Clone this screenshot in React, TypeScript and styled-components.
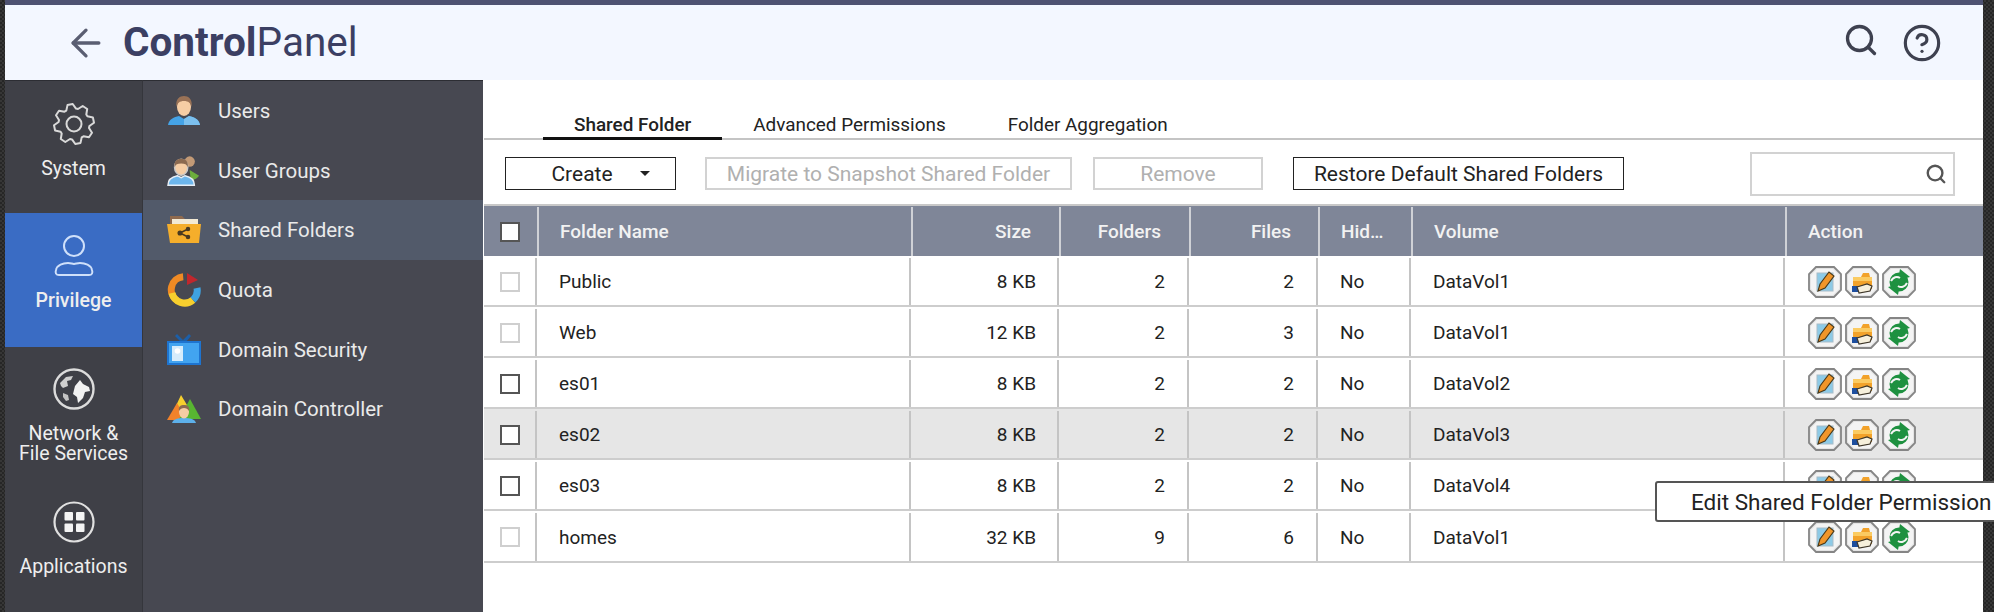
import styled, { createGlobalStyle } from "styled-components";
import { ArrowLeft, CircleHelp, Search } from "lucide-react";

const GlobalStyle = createGlobalStyle`
  html, body {
    margin: 0;
    height: 612px;
    overflow: hidden;
    background: repeating-conic-gradient(#262626 0 25%, #363636 0 50%) 0 0 / 4px 4px;
    font-family: Roboto, "Liberation Sans", sans-serif;
  }
`;

const Frame = styled.div`
  position: relative;
  width: 1978px;
  height: 612px;
  margin-left: 5px;
  display: flex;
  flex-direction: column;
  border-top: 5px solid #4e5272;
  box-sizing: border-box;
  background: #fff;
`;

const Header = styled.header`
  height: 75px;
  flex: none;
  display: flex;
  align-items: center;
  padding: 0 41px 0 59px;
  background: #f3f7ff;
  color: #3b3f63;
`;

const Title = styled.h1`
  margin: 0 0 0 15px;
  font-size: 40.5px;
  font-weight: 400;
  line-height: 1;
  b {
    font-weight: 700;
  }
`;

const HeaderIcons = styled.div`
  margin-left: auto;
  display: flex;
  align-items: center;
  gap: 23px;
  color: #3e4150;
`;

const HeaderSearch = styled(Search)`
  margin-top: -5px;
`;

const Body = styled.div`
  flex: 1;
  display: flex;
  min-height: 0;
`;

const Rail = styled.nav`
  width: 137px;
  flex: none;
  padding-top: 1px;
  border-top: 1px solid #2c2d33;
  border-right: 1px solid #35363c;
  background: #3f4047;
`;

const RailItem = styled.div<{ $h: number; $active?: boolean }>`
  height: ${({ $h }) => $h}px;
  box-sizing: border-box;
  padding-top: 21px;
  display: flex;
  flex-direction: column;
  align-items: center;
  text-align: center;
  background: ${({ $active }) => ($active ? "#3a6cc4" : "transparent")};
  color: #eee;
  font-size: 19.5px;
  font-weight: ${({ $active }) => ($active ? 500 : 400)};
  line-height: 20px;
`;

const RailLabel = styled.span<{ $mt?: number }>`
  margin-top: ${({ $mt }) => $mt ?? 14}px;
`;

const SubMenu = styled.nav`
  width: 340px;
  flex: none;
  border-top: 1px solid #2c2d33;
  background: #474851;
`;

const SubItem = styled.div<{ $active?: boolean }>`
  height: 59.7px;
  display: flex;
  align-items: center;
  gap: 17px;
  padding-left: 24px;
  background: ${({ $active }) => ($active ? "#525a6a" : "transparent")};
  color: #eaeaea;
  font-size: 20.5px;
`;

const SubIcon = styled.span`
  width: 34px;
  flex: none;
  display: flex;
  justify-content: center;
`;

const Main = styled.main`
  flex: 1;
  min-width: 0;
  margin-left: 1px;
  font-size: 19px;
  color: #222;
`;

const Tabs = styled.div`
  height: 60px;
  box-sizing: border-box;
  display: flex;
  align-items: flex-end;
  padding-left: 59px;
  border-bottom: 2px solid #c4c4c4;
  font-size: 18.9px;
`;

const Tab = styled.div<{ $active?: boolean }>`
  height: 37px;
  box-sizing: border-box;
  margin-bottom: -2px;
  padding: 10px 31px 0;
  font-weight: ${({ $active }) => ($active ? 500 : 400)};
  border-bottom: 3px solid ${({ $active }) => ($active ? "#111" : "transparent")};
`;

const Toolbar = styled.div`
  height: 64px;
  box-sizing: border-box;
  display: flex;
  align-items: center;
  padding: 3px 28px 0 21px;
`;

const Button = styled.div<{ $w: number; $ml?: number; $pl?: number; $disabled?: boolean }>`
  width: ${({ $w }) => $w}px;
  height: 33px;
  box-sizing: border-box;
  margin-left: ${({ $ml }) => $ml ?? 0}px;
  padding-left: ${({ $pl }) => $pl ?? 0}px;
  display: flex;
  align-items: center;
  justify-content: center;
  gap: 27px;
  border: ${({ $disabled }) => ($disabled ? "2px solid #d2d2d2" : "1.5px solid #222")};
  color: ${({ $disabled }) => ($disabled ? "#b0b0b0" : "#222")};
  font-size: 21px;
  white-space: nowrap;
`;

const Caret = styled.span`
  width: 0;
  height: 0;
  border-left: 5px solid transparent;
  border-right: 5px solid transparent;
  border-top: 5px solid #222;
`;

const SearchBox = styled.div`
  width: 205px;
  height: 44px;
  box-sizing: border-box;
  margin-left: auto;
  display: flex;
  align-items: center;
  justify-content: flex-end;
  padding-right: 6px;
  border: 2px solid #d2d2d2;
  color: #555;
`;

const HEAD_COLS = "53px 374px 148px 130px 129px 93px 374px 197px";
const ROW_COLS = "51px 374px 148px 130px 129px 93px 374px 198px";

const HeadRow = styled.div`
  height: 52px;
  box-sizing: border-box;
  display: grid;
  grid-template-columns: ${HEAD_COLS};
  border-top: 2px solid #c8c8c8;
  background: #7f8698;
  color: #f2f2f2;
  font-weight: 500;
`;

const HeadCell = styled.div<{ $right?: boolean; $pr?: number }>`
  margin-top: 1px;
  display: flex;
  align-items: center;
  justify-content: ${({ $right }) => ($right ? "flex-end" : "flex-start")};
  padding: 0 ${({ $pr }) => $pr ?? 0}px 0 21px;
  border-left: 2px solid #cfd1d6;
  &:first-child {
    border-left: none;
    padding-left: 16px;
  }
`;

const Row = styled.div<{ $hover?: boolean }>`
  height: 51.1px;
  box-sizing: border-box;
  display: grid;
  grid-template-columns: ${ROW_COLS};
  border-bottom: 2px solid #cdcdcd;
  background: ${({ $hover }) => ($hover ? "#e6e6e6" : "#fff")};
`;

const Cell = styled.div<{ $right?: boolean; $pr?: number }>`
  margin-top: 2px;
  display: flex;
  align-items: center;
  justify-content: ${({ $right }) => ($right ? "flex-end" : "flex-start")};
  padding: 0 ${({ $pr }) => $pr ?? 0}px 0 22px;
  border-left: 2px solid #c4c4c4;
  &:first-child {
    border-left: none;
    padding-left: 16px;
  }
`;

const Check = styled.span<{ $light?: boolean }>`
  width: 20px;
  height: 20px;
  box-sizing: border-box;
  border: 2px solid ${({ $light }) => ($light ? "#cfcfcf" : "#555")};
  background: #fff;
`;

const Actions = styled.div`
  display: flex;
  gap: 3px;
  margin-left: 1px;
`;

const Tooltip = styled.div`
  position: absolute;
  left: 1650px;
  top: 476px;
  width: 345px;
  height: 41px;
  box-sizing: border-box;
  display: flex;
  align-items: center;
  padding-left: 34px;
  border: 2px solid #555;
  border-radius: 3px 0 0 3px;
  background: #fff;
  color: #222;
  font-size: 22.5px;
  white-space: nowrap;
`;

// 8-toothed gear outline
function gearPath(cx: number, cy: number, r1: number, r2: number) {
  const pts: string[] = [];
  for (let i = 0; i < 8; i++) {
    const a = (i * Math.PI) / 4 - Math.PI / 8;
    const steps: [number, number][] = [
      [r1, a - 0.13],
      [r2, a + 0.06],
      [r2, a + 0.33],
      [r1, a + 0.52],
    ];
    steps.forEach(([r, t]) =>
      pts.push(`${(cx + r * Math.cos(t)).toFixed(1)} ${(cy + r * Math.sin(t)).toFixed(1)}`)
    );
  }
  return `M${pts.join("L")}Z`;
}

const GearIcon = () => (
  <svg width="44" height="42" viewBox="0 0 44 42" fill="none" stroke="#d9d9d9" strokeWidth="2" strokeLinejoin="round">
    <path d={gearPath(22, 21, 15.5, 20)} />
    <circle cx="22" cy="21" r="7.5" />
  </svg>
);

const PrivilegeIcon = () => (
  <svg width="44" height="42" viewBox="0 0 44 42" fill="none" stroke="#cfe0fa" strokeWidth="2">
    <circle cx="22" cy="12" r="10" />
    <path d="M7 41c-3 0-4-2-3-5 1-5 7-7 12-7 3 0 4 1 6 1s3-1 6-1c5 0 11 2 12 7 1 3 0 5-3 5Z" />
  </svg>
);

const GlobeIcon = () => (
  <svg width="44" height="42" viewBox="0 0 44 42">
    <circle cx="22" cy="21" r="19.5" fill="none" stroke="#dcdcdc" strokeWidth="2.4" />
    <path d="M23 18l5-6 3 4 6 3 1 4-5 1-2 6-5 5-1-6-4-3Z" fill="#f2f2f2" />
    <path d="M8 15l6-6 7-1-2 4-4 1 1 5-5 2-2-2Z" fill="#d0d0d0" />
    <path d="M11 25l5 2 1 5-3 1-3-4Z" fill="#c4c4c4" />
  </svg>
);

const AppsIcon = () => (
  <svg width="44" height="42" viewBox="0 0 44 42">
    <circle cx="22" cy="21" r="19.5" fill="none" stroke="#e0e0e0" strokeWidth="2.2" />
    <rect x="12.5" y="11" width="8.5" height="8.5" rx="1" fill="#f4f4f4" />
    <rect x="24" y="11" width="8.5" height="8.5" rx="1" fill="#f4f4f4" />
    <rect x="12.5" y="22.5" width="8.5" height="8.5" rx="1" fill="#f4f4f4" />
    <rect x="24" y="22.5" width="8.5" height="8.5" rx="1" fill="#f4f4f4" />
  </svg>
);

const UsersIcon = () => (
  <svg width="34" height="34" viewBox="0 0 34 34">
    <path d="M1 31c1-6 6-8 11-9l5 3 5-3c5 1 10 3 11 9Z" fill="#45a3e6" />
    <path d="M17 25v6h16c-1-6-6-8-11-9Z" fill="#7cc0ee" />
    <ellipse cx="17" cy="13" rx="7" ry="9" fill="#f6cda4" />
    <path d="M9.500 13C8 5 13 2 17 2s9 3 7.500 11c-1-4-3-6-7.500-6S10.500 9 9.500 13Z" fill="#9a7256" />
  </svg>
);

const GroupsIcon = () => (
  <svg width="36" height="34" viewBox="0 0 36 34">
    <circle cx="24" cy="7" r="5.500" fill="#c39a76" />
    <path d="M24 16l10 6c-2 3-6 5-9 4Z" fill="#6cae3c" />
    <path d="M1 32c0-7 5-9 10-10l4 2 4-2c5 1 10 3 10 10Z" fill="#6db6ec" stroke="#e8eef5" strokeWidth="1.500" />
    <ellipse cx="15" cy="13" rx="7" ry="8.500" fill="#f6cda4" stroke="#c8c8c8" strokeWidth="1.500" />
    <path d="M8 13C7 6 11 4 15 4s8 2 7 9c-1-3-3-4-7-4s-6 1-7 4Z" fill="#8c6a50" />
  </svg>
);

const SharedFolderIcon = () => (
  <svg width="34" height="30" viewBox="0 0 34 30">
    <path d="M3 1h12l3 3h13v6H3Z" fill="#8f6a4e" />
    <rect x="5" y="4" width="26" height="7" fill="#f3ead4" />
    <path d="M0 9h34l-2 19H3Z" fill="#f5ae2b" />
    <g stroke="#4a3a20" strokeWidth="1.500" fill="#4a3a20">
      <path d="M13 18l8-4M13 18l8 4" fill="none" />
      <circle cx="13" cy="18" r="1.800" />
      <circle cx="21" cy="14" r="1.500" />
      <circle cx="21" cy="22" r="1.500" />
    </g>
  </svg>
);

const QuotaIcon = () => (
  <svg width="34" height="34" viewBox="0 0 34 34" fill="none" strokeWidth="7">
    <path d="M9 27A13 13 0 0 1 18 4" stroke="#f08a24" transform="rotate(-8 16 17)" />
    <path d="M5 20a13 13 0 0 0 21 7" stroke="#f7cf2e" />
    <path d="M26 27a13 13 0 0 0 4-12" stroke="#3fa3e0" />
    <path d="M20 0l11 7-11 5Z" fill="#c0272d" stroke="none" />
  </svg>
);

const SecurityIcon = () => (
  <svg width="34" height="32" viewBox="0 0 34 32">
    <path d="M10 0l6 6 6-6 2 2-5 6h-5L8 2Z" fill="#1c5fa8" />
    <rect x="0" y="7" width="34" height="24" fill="#1e74d0" />
    <rect x="2" y="9" width="30" height="20" fill="#42a4f0" />
    <rect x="5" y="12" width="11" height="15" fill="#d6ecfb" />
    <circle cx="10.500" cy="17" r="2.800" fill="#fff" />
  </svg>
);

const ControllerIcon = () => (
  <svg width="34" height="30" viewBox="0 0 34 30">
    <path d="M14 1l9 15H7Z" fill="#f7cf2e" />
    <path d="M10 9l10 17H0Z" fill="#f2822a" />
    <path d="M23 5l11 20H12Z" fill="#58b531" />
    <path d="M5 29c1-4 6-5 12-5s11 1 12 5Z" fill="#5db0ea" />
    <ellipse cx="17" cy="18" rx="5" ry="6.500" fill="#f6cda4" />
    <path d="M12 17c-1-5 2-6 5-6s6 1 5 6c-1-2-3-3-5-3s-4 1-5 3Z" fill="#8c6a50" />
  </svg>
);

const Octagon = () => (
  <>
    <path d="M8 1h18l7 7v16l-7 7H8l-7-7V8Z" fill="#e4e4e4" stroke="#858585" strokeWidth="1.800" />
    <path d="M9 3h16l6 6v14l-6 6H9l-6-6V9Z" fill="#f4f4f4" />
  </>
);

const EditIcon = () => (
  <svg width="34" height="32" viewBox="0 0 34 32">
    <Octagon />
    <rect x="9" y="7" width="16" height="18" fill="#8dcae6" stroke="#a8bcc8" />
    <path d="M10 25l2-7 9-12 5 4-9 12Z" fill="#f0962a" stroke="#4a3818" strokeWidth="1.100" />
  </svg>
);

const FolderHandIcon = () => (
  <svg width="34" height="32" viewBox="0 0 34 32">
    <Octagon />
    <path d="M8 11h8l2-4h6l1 4h2v12H8Z" fill="#f2a22a" />
    <path d="M8 11h19v4H8Z" fill="#fbcb62" />
    <path d="M7 20h7v6H7Z" fill="#1d4e9e" />
    <path d="M12 21l10-3 5 2-2 5-11 2Z" fill="#f6f0dc" stroke="#3e3628" strokeWidth="1.200" />
  </svg>
);

const RefreshIcon = () => (
  <svg width="34" height="32" viewBox="0 0 34 32">
    <Octagon />
    <circle cx="17" cy="16" r="7.500" fill="#1e9140" stroke="#1e9140" strokeWidth="4" />
    <path d="M18 3l10 8-12 3ZM16 29L6 21l12-3Z" fill="#1e9140" />
    <path d="M9 15c2-4 6-5 9-3M25 17c-2 4-6 5-9 3" fill="none" stroke="#f4f4f4" strokeWidth="2" />
  </svg>
);

const rows = [
  { name: "Public", size: "8 KB", folders: 2, files: 2, volume: "DataVol1", light: true },
  { name: "Web", size: "12 KB", folders: 2, files: 3, volume: "DataVol1", light: true },
  { name: "es01", size: "8 KB", folders: 2, files: 2, volume: "DataVol2" },
  { name: "es02", size: "8 KB", folders: 2, files: 2, volume: "DataVol3", hover: true },
  { name: "es03", size: "8 KB", folders: 2, files: 2, volume: "DataVol4" },
  { name: "homes", size: "32 KB", folders: 9, files: 6, volume: "DataVol1", light: true },
];

const subItems = [
  { label: "Users", icon: <UsersIcon /> },
  { label: "User Groups", icon: <GroupsIcon /> },
  { label: "Shared Folders", icon: <SharedFolderIcon />, active: true },
  { label: "Quota", icon: <QuotaIcon /> },
  { label: "Domain Security", icon: <SecurityIcon /> },
  { label: "Domain Controller", icon: <ControllerIcon /> },
];

export default function App() {
  return (
    <Frame>
      <GlobalStyle />
      <Header>
        <ArrowLeft size={44} strokeWidth={1.8} color="#5a5e72" />
        <Title>
          <b>Control</b>Panel
        </Title>
        <HeaderIcons>
          <HeaderSearch size={36} strokeWidth={2.2} />
          <CircleHelp size={40} strokeWidth={1.9} />
        </HeaderIcons>
      </Header>
      <Body>
        <Rail>
          <RailItem $h={131}>
            <GearIcon />
            <RailLabel>System</RailLabel>
          </RailItem>
          <RailItem $h={134} $active>
            <PrivilegeIcon />
            <RailLabel $mt={15}>Privilege</RailLabel>
          </RailItem>
          <RailItem $h={133}>
            <GlobeIcon />
            <RailLabel>
              Network &amp;
              <br />
              File Services
            </RailLabel>
          </RailItem>
          <RailItem $h={130}>
            <AppsIcon />
            <RailLabel>Applications</RailLabel>
          </RailItem>
        </Rail>
        <SubMenu>
          {subItems.map((item) => (
            <SubItem key={item.label} $active={item.active}>
              <SubIcon>{item.icon}</SubIcon>
              {item.label}
            </SubItem>
          ))}
        </SubMenu>
        <Main>
          <Tabs>
            <Tab $active>Shared Folder</Tab>
            <Tab>Advanced Permissions</Tab>
            <Tab>Folder Aggregation</Tab>
          </Tabs>
          <Toolbar>
            <Button $w={171} $pl={20}>
              Create
              <Caret />
            </Button>
            <Button $w={367} $ml={29} $disabled>
              Migrate to Snapshot Shared Folder
            </Button>
            <Button $w={170} $ml={21} $disabled>
              Remove
            </Button>
            <Button $w={331} $ml={30}>
              Restore Default Shared Folders
            </Button>
            <SearchBox>
              <Search size={22} strokeWidth={2.6} />
            </SearchBox>
          </Toolbar>
          <HeadRow>
            <HeadCell>
              <Check />
            </HeadCell>
            <HeadCell>Folder Name</HeadCell>
            <HeadCell $right $pr={28}>
              Size
            </HeadCell>
            <HeadCell $right $pr={28}>
              Folders
            </HeadCell>
            <HeadCell $right $pr={27}>
              Files
            </HeadCell>
            <HeadCell>Hid…</HeadCell>
            <HeadCell>Volume</HeadCell>
            <HeadCell>Action</HeadCell>
          </HeadRow>
          {rows.map((row) => (
            <Row key={row.name} $hover={row.hover}>
              <Cell>
                <Check $light={row.light} />
              </Cell>
              <Cell>{row.name}</Cell>
              <Cell $right $pr={21}>
                {row.size}
              </Cell>
              <Cell $right $pr={22}>
                {row.folders}
              </Cell>
              <Cell $right $pr={22}>
                {row.files}
              </Cell>
              <Cell>No</Cell>
              <Cell>{row.volume}</Cell>
              <Cell>
                <Actions>
                  <EditIcon />
                  <FolderHandIcon />
                  <RefreshIcon />
                </Actions>
              </Cell>
            </Row>
          ))}
        </Main>
      </Body>
      <Tooltip>Edit Shared Folder Permission</Tooltip>
    </Frame>
  );
}
